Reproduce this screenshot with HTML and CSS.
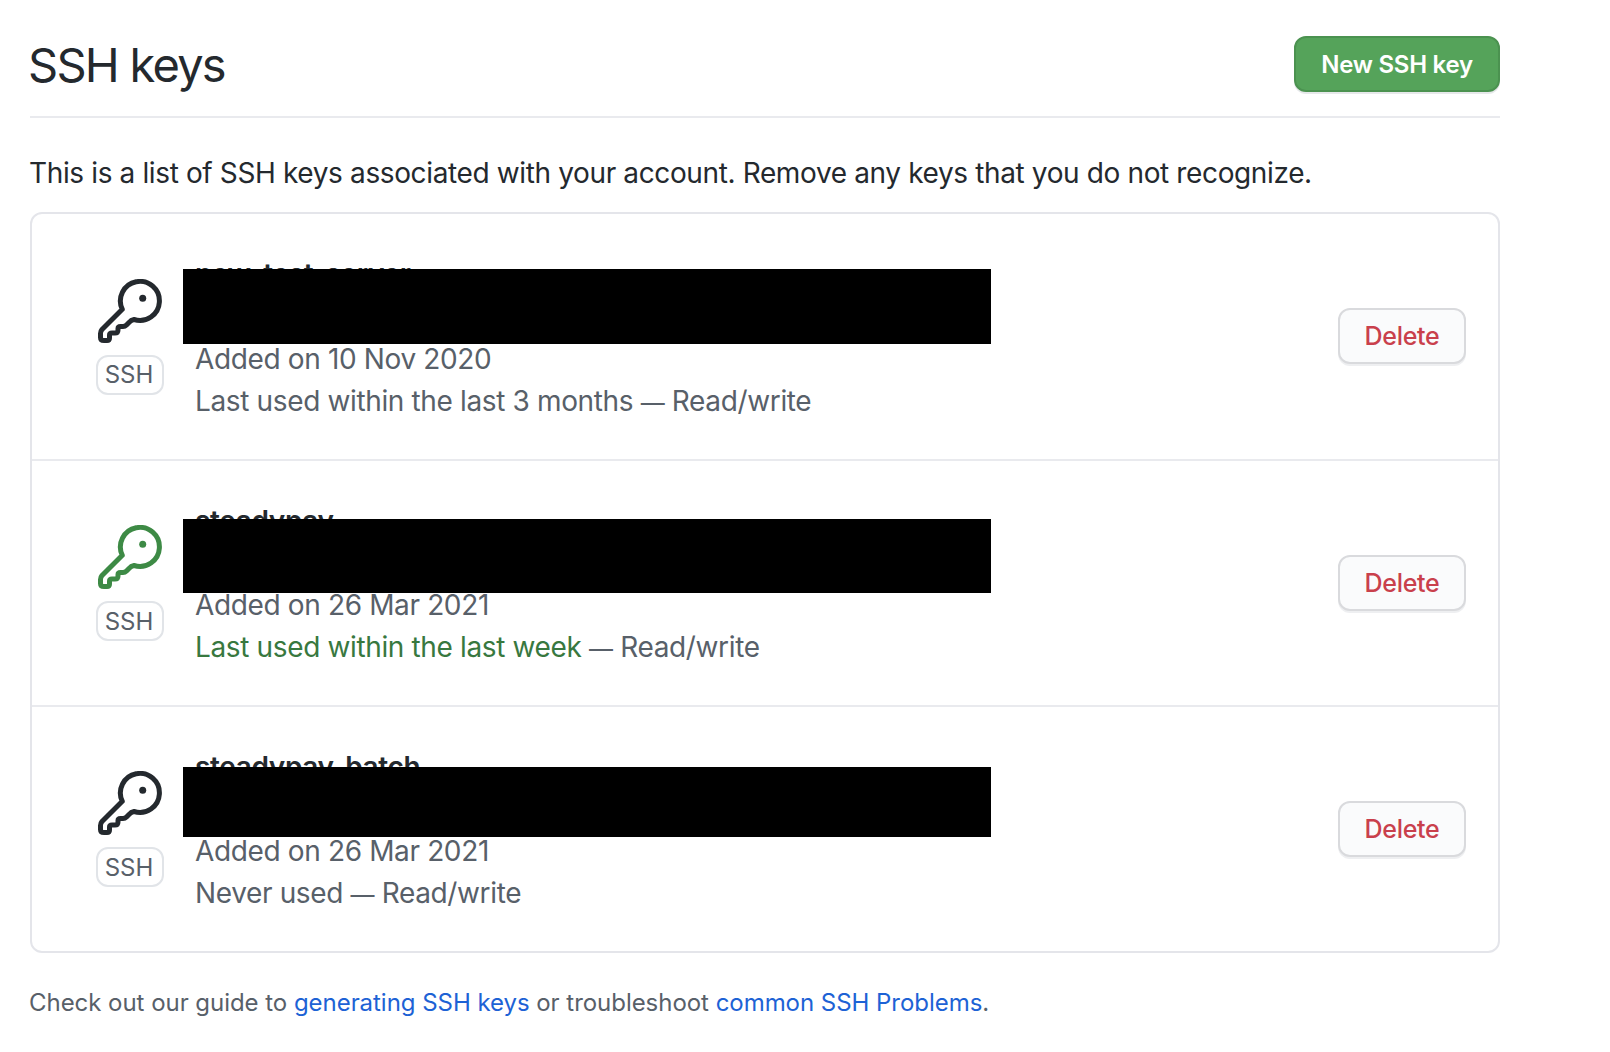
FILE: index.html
```html
<!DOCTYPE html>
<html lang="en">
<head>
<meta charset="utf-8">
<title>SSH keys</title>
<link rel="stylesheet" href="styles.css">
</head>
<body>
<main class="page">
  <header class="head">
    <h2 class="title">SSH keys</h2>
    <a class="btn-new">New SSH key</a>
  </header>
  <p class="intro">This is a list of SSH keys associated with your account. Remove any keys that you do not recognize.</p>
  <ul class="keys">
    <li class="key">
      <div class="badge">
        <svg class="key-icon" viewBox="0 0 64 64"><path class="key-line" d="M36 40.5A19.5 19.5 0 1 0 24.3 30.3L4 50.5Q2.5 52.2 2.5 54.5V58.5Q2.5 61.5 6 61.5H9Q11.5 61.5 11.5 59V56Q11.5 54 14 54H17Q20 54 20 51V49.5Q20 47.5 22.5 47.5H25Q27 47.5 28.5 46L31 43.5Q33 41 36 40.5Z"/><circle class="key-dot" cx="44.7" cy="19.3" r="3.5"/></svg>
        <span class="label">SSH</span>
      </div>
      <div class="info">
        <strong class="name">new-test-server</strong>
        <code class="print">SHA256:redacted</code>
        <span class="meta">Added on 10 Nov 2020</span>
        <span class="meta">Last used within the last 3 months <span class="dash">—</span> Read/write</span>
      </div>
      <a class="btn-del">Delete</a>
      <div class="mask mask-a"></div>
    </li>
    <li class="key">
      <div class="badge recent">
        <svg class="key-icon" viewBox="0 0 64 64"><path class="key-line" d="M36 40.5A19.5 19.5 0 1 0 24.3 30.3L4 50.5Q2.5 52.2 2.5 54.5V58.5Q2.5 61.5 6 61.5H9Q11.5 61.5 11.5 59V56Q11.5 54 14 54H17Q20 54 20 51V49.5Q20 47.5 22.5 47.5H25Q27 47.5 28.5 46L31 43.5Q33 41 36 40.5Z"/><circle class="key-dot" cx="44.7" cy="19.3" r="3.5"/></svg>
        <span class="label">SSH</span>
      </div>
      <div class="info">
        <strong class="name">steadypay</strong>
        <code class="print">SHA256:redacted</code>
        <span class="meta">Added on 26 Mar 2021</span>
        <span class="meta"><span class="used">Last used within the last week</span> <span class="dash">—</span> Read/write</span>
      </div>
      <a class="btn-del">Delete</a>
      <div class="mask mask-b"></div>
    </li>
    <li class="key">
      <div class="badge">
        <svg class="key-icon" viewBox="0 0 64 64"><path class="key-line" d="M36 40.5A19.5 19.5 0 1 0 24.3 30.3L4 50.5Q2.5 52.2 2.5 54.5V58.5Q2.5 61.5 6 61.5H9Q11.5 61.5 11.5 59V56Q11.5 54 14 54H17Q20 54 20 51V49.5Q20 47.5 22.5 47.5H25Q27 47.5 28.5 46L31 43.5Q33 41 36 40.5Z"/><circle class="key-dot" cx="44.7" cy="19.3" r="3.5"/></svg>
        <span class="label">SSH</span>
      </div>
      <div class="info">
        <strong class="name">steadypay_batch</strong>
        <code class="print">SHA256:redacted</code>
        <span class="meta">Added on 26 Mar 2021</span>
        <span class="meta">Never used <span class="dash">—</span> Read/write</span>
      </div>
      <a class="btn-del">Delete</a>
      <div class="mask mask-c"></div>
    </li>
  </ul>
  <p class="foot">Check out our guide to <a class="link">generating SSH keys</a> or troubleshoot <a class="link">common SSH Problems</a>.</p>
</main>
</body>
</html>
```
FILE: styles.css
```css
* { box-sizing: border-box; }
html, body { margin: 0; background: #fff; }
body { font-family: Inter, "Liberation Sans", sans-serif; color: #24292e; }
.page { width: 1470px; margin-left: 30px; padding-top: 36px; }
.head { display: flex; justify-content: space-between; align-items: flex-start; height: 82px; border-bottom: 2px solid #e9eaee; }
.title { margin: 0 0 0 -2px; font-size: 47px; line-height: 58px; font-weight: 400; letter-spacing: -1.75px; }
.btn-new { width: 206px; height: 56px; display: flex; align-items: center; justify-content: center; background: #55a35a; border: 2px solid #4b9250; border-radius: 12px; color: #fff; font-size: 24px; font-weight: 600; letter-spacing: -0.25px; box-shadow: 0 2px 0 #e6e8ea; }
.intro { margin: 36px 0 0 -1px; font-size: 28px; line-height: 38px; letter-spacing: -0.37px; }
.keys { list-style: none; margin: 20px 0 0; padding: 0; border: 2px solid #e4e5ea; border-radius: 12px; }
.key { position: relative; height: 246px; display: flex; align-items: center; padding: 0 32px 0 63px; border-top: 2px solid #e9eaee; }
.key:first-child { height: 245px; border-top: 0; }
.key:first-child .btn-del { margin-bottom: 2px; }
.key:first-child .name { margin: -1px 0 1px; }
.badge { width: 70px; margin-right: 30px; display: flex; flex-direction: column; align-items: center; color: #24292e; }
.key-icon { width: 64px; height: 64px; display: block; }
.key-line { fill: none; stroke: currentColor; stroke-width: 5; stroke-linejoin: round; }
.key-dot { fill: currentColor; }
.recent { color: #3d8a45; }
.label { margin-top: 12px; width: 68px; height: 40px; display: flex; align-items: center; justify-content: center; padding-right: 2px; border: 2px solid #e1e4e8; border-radius: 12px; font-size: 24px; color: #586069; }
.info { flex: 1; display: flex; flex-direction: column; padding-top: 2px; font-size: 28px; line-height: 42px; letter-spacing: -0.36px; color: #586069; }
.name { color: #24292e; font-weight: 600; }
.print { font-family: "Liberation Mono", monospace; font-size: 24px; }
.used { color: #38783f; }
.dash { font-size: 24px; line-height: 1; }
.btn-del { width: 128px; height: 56px; display: flex; align-items: center; justify-content: center; background: #fafbfc; border: 2px solid #d9dadd; border-radius: 12px; color: #c9404c; font-size: 25px; font-weight: 500; letter-spacing: -0.3px; box-shadow: 0 2px 0 #eeeff1; }
.mask { position: absolute; left: 151px; width: 808px; background: #000; }
.mask-a { top: 55px; height: 75px; }
.mask-b { top: 58px; height: 74px; }
.mask-c { top: 60px; height: 70px; }
.foot { margin: 32px 0 0 -1px; font-size: 24px; line-height: 36px; letter-spacing: -0.04px; color: #586069; }
.link { color: #1d62d5; }
```
